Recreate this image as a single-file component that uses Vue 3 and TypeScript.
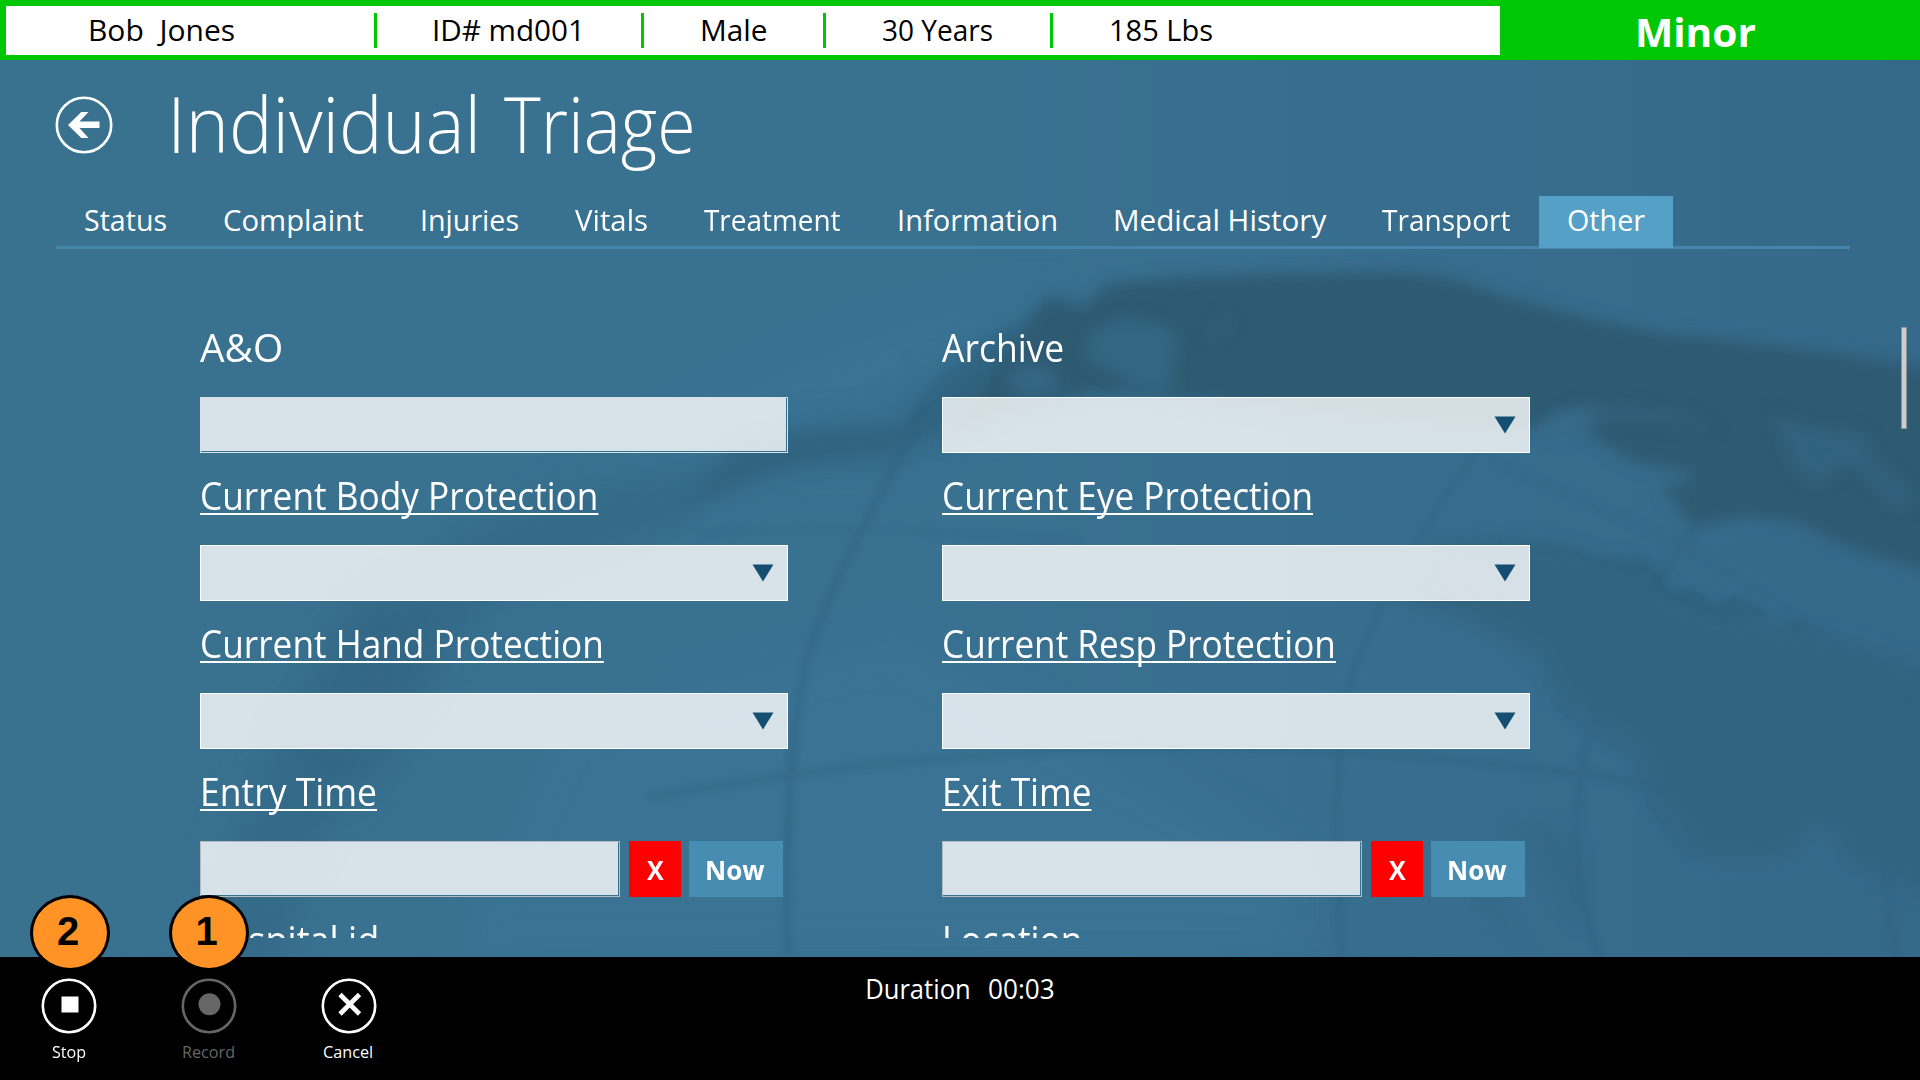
<script setup lang="ts">
import type { Directive } from 'vue'

interface Label { text: string; w: number }
interface Tab extends Label { cell: number }
interface Field extends Label { kind: 'text' | 'select' | 'time'; linked: boolean }

// Condenses a label horizontally. By default the glyphs span the given width;
// with .advance the whole text run, side bearings included, does.
const vFit: Directive<HTMLElement, number, 'advance'> = {
  mounted(el, { value, modifiers }) {
    const natural = el.offsetWidth
    el.style.marginRight = `${value - natural}px`
    if (modifiers.advance) {
      el.style.transform = `scaleX(${value / natural})`
      return
    }
    const ctx = document.createElement('canvas').getContext('2d')
    if (!ctx) return
    const cs = getComputedStyle(el)
    ctx.font = `${cs.fontWeight} ${cs.fontSize} ${cs.fontFamily}`
    const m = ctx.measureText(el.textContent ?? '')
    const s = value / (m.actualBoundingBoxLeft + m.actualBoundingBoxRight)
    el.style.transform = `translateX(${m.actualBoundingBoxLeft * s}px) scaleX(${s})`
  },
}

const patient: Label[] = [
  { text: 'Bob\u00a0 Jones', w: 144 },
  { text: 'ID# md001', w: 145 },
  { text: 'Male', w: 65 },
  { text: '30 Years', w: 109 },
  { text: '185 Lbs', w: 101 },
]

const tabs: Tab[] = [
  { text: 'Status', w: 81, cell: 139 },
  { text: 'Complaint', w: 139, cell: 198 },
  { text: 'Injuries', w: 96, cell: 153 },
  { text: 'Vitals', w: 72, cell: 129.5 },
  { text: 'Treatment', w: 136, cell: 194.5 },
  { text: 'Information', w: 157, cell: 216 },
  { text: 'Medical History', w: 211.5, cell: 267.5 },
  { text: 'Transport', w: 128, cell: 185.5 },
  { text: 'Other', w: 77, cell: 134 },
]

const fields: Field[] = [
  { text: 'A&O', w: 83, kind: 'text', linked: false },
  { text: 'Archive', w: 122, kind: 'select', linked: false },
  { text: 'Current Body Protection', w: 398.5, kind: 'select', linked: true },
  { text: 'Current Eye Protection', w: 371, kind: 'select', linked: true },
  { text: 'Current Hand Protection', w: 404, kind: 'select', linked: true },
  { text: 'Current Resp Protection', w: 393.5, kind: 'select', linked: true },
  { text: 'Entry Time', w: 177, kind: 'time', linked: true },
  { text: 'Exit Time', w: 149.5, kind: 'time', linked: true },
  { text: 'Hospital id', w: 179, kind: 'text', linked: false },
  { text: 'Location', w: 140, kind: 'text', linked: false },
]
</script>

<template>
  <div class="app">
    <header class="patient">
      <div class="facts">
        <div v-for="p in patient" :key="p.text" class="fact"><span v-fit="p.w" class="t">{{ p.text }}</span></div>
      </div>
      <div class="severity"><span v-fit="118" class="t">Minor</span></div>
    </header>

    <main class="page">
      <svg class="globe" viewBox="0 60 1920 897" preserveAspectRatio="none">
        <defs>
          <linearGradient id="sea" x1="0" y1="0" x2="1" y2="0">
            <stop offset="0" stop-color="#39728f" />
            <stop offset=".5" stop-color="#397191" />
            <stop offset="1" stop-color="#35698a" />
          </linearGradient>
          <filter id="b3" x="-10%" y="-10%" width="120%" height="120%"><feGaussianBlur stdDeviation="3" /></filter>
          <filter id="b7" x="-10%" y="-10%" width="120%" height="120%"><feGaussianBlur stdDeviation="8" /></filter>
          <filter id="b20" x="-30%" y="-30%" width="160%" height="160%"><feGaussianBlur stdDeviation="18" /></filter>
        </defs>
        <rect y="60" width="1920" height="897" fill="url(#sea)" />
        <path filter="url(#b20)" fill="#3a7495" opacity=".7" d="M150 960C260 700 560 440 900 330L1060 290L880 400L700 440C500 520 300 700 200 960ZM450 960L560 720L900 640L1300 860L1300 960Z" />
        <path filter="url(#b20)" fill="#336685" opacity=".6" d="M1060 320C980 350 925 385 890 425C820 430 750 430 700 470C560 480 430 530 370 610C290 720 210 830 180 980H280C300 860 370 740 450 640C520 570 610 560 670 530C740 450 850 470 900 470C930 430 980 420 1060 410Z" />
        <path filter="url(#b20)" fill="#336582" opacity=".5" d="M350 590C390 610 440 620 460 600L390 780C350 800 300 790 280 760Z" />
        <path filter="url(#b7)" fill="#2f617c" opacity=".65" d="M1050 310C970 340 940 370 905 425C850 430 790 425 740 440C720 460 690 500 660 530C740 470 820 460 890 455C930 430 980 410 1070 400Z" />
        <path filter="url(#b7)" fill="#2d5a72" d="M1035 310L1050 295L1085 308L1102 285C1180 273 1250 276 1355 272C1400 271 1440 274 1470 284C1530 305 1610 325 1680 335C1760 342 1840 352 1940 370V575L1863 553L1830 540L1798 523L1746 517L1694 527L1661 487L1694 480L1690 471L1640 465L1602 443L1583 427L1600 412L1563 410L1530 430C1400 430 1300 410 1180 400C1100 382 1000 400 935 450C975 390 1020 350 1035 310Z" />
        <g filter="url(#b7)" fill="#356987">
          <path opacity=".8" d="M1090 335Q1110 315 1135 320Q1175 320 1178 345Q1172 370 1170 390Q1140 395 1118 375Q1085 365 1085 350Z" />
          <ellipse cx="1033" cy="381" rx="26" ry="17" opacity=".85" />
          <path opacity=".4" d="M1205 338L1225 312L1234 325L1218 342Z" />
          <path d="M1540 430L1580 405L1640 408L1690 416L1720 430L1690 425L1600 420L1565 440Z" opacity=".5" />
          <path d="M1768 412L1815 428L1865 432L1872 456L1920 500L1895 510L1868 480L1850 462L1815 488L1790 463L1783 440Z" opacity=".55" />
        </g>
        <path filter="url(#b7)" fill="#326380" opacity=".8" d="M1433 543L1524 540L1570 545L1602 557L1655 563L1668 590L1726 613L1811 630L1940 670V900L1850 867L1824 823L1785 860L1700 860L1655 807L1635 753L1557 700L1537 657L1459 617L1400 600Z" />
        <path filter="url(#b3)" fill="#2e5e78" opacity=".6" d="M1500 538L1560 548L1602 562L1640 560L1655 570L1670 592L1690 587L1715 603L1735 595L1760 605L1775 625L1800 618L1820 638L1765 620L1720 620L1665 600L1645 575L1600 568L1560 552Z" />
        <path filter="url(#b7)" fill="#326681" opacity=".5" d="M1510 825L1560 830L1585 860L1580 930L1560 900L1530 850ZM1490 880L1510 930L1530 957L1480 900Z" />
        <g filter="url(#b3)" fill="none" stroke="#2f5f7e" stroke-width="6" opacity=".4">
          <path d="M925 405C880 500 835 570 810 650C790 720 785 820 788 957" stroke-width="8" />
          <path d="M1478 450C1410 540 1360 640 1345 700C1335 770 1336 860 1342 957" />
          <path d="M1700 520C1650 590 1600 690 1582 760C1572 830 1575 900 1600 957" />
          <path d="M1940 650C1890 720 1880 780 1882 850L1895 957" />
          <path d="M649 797C760 780 840 765 960 757C1100 745 1250 746 1400 756C1600 770 1760 800 1940 840" />
          <path d="M700 535C800 525 950 530 1080 542" opacity=".6" />
          <path d="M1490 460C1600 510 1750 560 1940 720M1430 590C1560 620 1640 650 1760 690" opacity=".6" />
          <path d="M1557 700C1570 730 1620 740 1636 760C1640 800 1665 830 1690 857" />
        </g>
      </svg>

      <div class="titlebar">
        <svg class="back" width="58" height="58" viewBox="0 0 58 58">
          <circle cx="29" cy="29" r="27.2" fill="none" stroke="#fff" stroke-width="2.6" />
          <path fill="#fff" d="M13 29L26.300 16H33.500L24.500 25.600H44.500V32H24.500L33.500 42H26.300Z" />
        </svg>
        <h1><span v-fit="301" class="t">Individual</span><span v-fit="188" class="t">Triage</span></h1>
      </div>

      <nav class="tabs">
        <div v-for="t in tabs" :key="t.text" class="tab" :class="{ active: t.text === 'Other' }" :style="{ width: t.cell + 'px' }"><span v-fit="t.w" class="t">{{ t.text }}</span></div>
      </nav>

      <section class="form">
        <div v-for="f in fields" :key="f.text" class="field">
          <label><span v-fit.advance="f.w" class="t" :class="{ linked: f.linked }">{{ f.text }}</span></label>
          <div v-if="f.kind === 'text'" class="box input"></div>
          <div v-else-if="f.kind === 'select'" class="box select">
            <svg width="22" height="18" viewBox="0 0 22 18"><path fill="#144f71" d="M.5 .5H21.500L11 17.500Z" /></svg>
          </div>
          <div v-else class="time">
            <div class="box input grey"></div>
            <div class="clear"><span v-fit="17" class="t">X</span></div>
            <div class="now"><span v-fit="58" class="t">Now</span></div>
          </div>
        </div>
      </section>
      <div class="thumb"></div>
    </main>

    <footer class="bar">
      <div class="cmd">
        <svg width="56" height="56" viewBox="0 0 56 56">
          <circle cx="28" cy="28" r="26.200" fill="none" stroke="#fff" stroke-width="2.600" />
          <rect x="20.500" y="18.500" width="17" height="16" fill="#fff" />
        </svg>
        <span v-fit="34" class="t">Stop</span>
        <b class="badge"><i>2</i></b>
      </div>
      <div class="cmd off">
        <svg width="56" height="56" viewBox="0 0 56 56">
          <circle cx="28" cy="28" r="26.200" fill="none" stroke="#666" stroke-width="2.600" />
          <circle cx="28.500" cy="26.300" r="11" fill="#666" />
        </svg>
        <span v-fit="51" class="t">Record</span>
        <b class="badge"><i>1</i></b>
      </div>
      <div class="cmd">
        <svg width="56" height="56" viewBox="0 0 56 56">
          <circle cx="28" cy="28" r="26.200" fill="none" stroke="#fff" stroke-width="2.600" />
          <path d="M19 16.500L38.500 36M38.500 16.500L19 36" stroke="#fff" stroke-width="4.600" />
        </svg>
        <span v-fit="48" class="t">Cancel</span>
      </div>
      <div class="duration"><span v-fit="102" class="t">Duration</span><span v-fit="65" class="t">00:03</span></div>
    </footer>
  </div>
</template>

<style>
body { margin: 0; background: #000; overflow: hidden; }
</style>

<style scoped>
.app {
  width: 1920px;
  height: 1080px;
  display: flex;
  flex-direction: column;
  overflow: hidden;
  color: #fff;
  font-family: "Open Sans", "Noto Sans", sans-serif;
}
.t {
  display: inline-block;
  white-space: pre;
  transform-origin: 0 50%;
}
.patient {
  box-sizing: border-box;
  height: 60px;
  flex: none;
  display: flex;
  background: #00c703;
  padding: 6px 0 5px 6px;
}
.facts {
  width: 1494px;
  display: flex;
  align-items: center;
  background: #fff;
  color: #000;
  font-size: 29.500px;
  line-height: 33px;
}
.fact {
  box-sizing: border-box;
  height: 35px;
  padding-left: 57px;
  border-right: 3px solid #00c703;
}
.fact:nth-child(1) { width: 371px; padding-left: 84px; }
.fact:nth-child(2) { width: 267px; }
.fact:nth-child(3) { width: 182px; padding-left: 57.500px; }
.fact:nth-child(4) { width: 227px; }
.fact:nth-child(5) { border-right: 0; padding-left: 58px; }
.severity {
  padding-left: 138px;
  font-size: 39.500px;
  font-weight: 700;
  line-height: 53px;
}
.page {
  position: relative;
  height: 897px;
  flex: none;
  display: flex;
  flex-direction: column;
}
.globe {
  position: absolute;
  inset: 0;
  width: 1920px;
  height: 897px;
}
.titlebar {
  position: relative;
  display: flex;
  align-items: flex-start;
  height: 136px;
  padding-left: 54.500px;
}
.back { flex: none; margin-top: 35.500px; }
h1 {
  display: flex;
  gap: 29px;
  margin: 12px 0 0 61px;
  font-size: 76.500px;
  font-weight: 300;
  line-height: 102px;
}
.tabs {
  position: relative;
  display: flex;
  height: 50px;
  margin: 0 70px 0 56px;
  border-bottom: 3px solid #4486ab;
  font-size: 29.500px;
  line-height: 48px;
}
.tab {
  box-sizing: border-box;
  flex: none;
  height: 52px;
  padding-left: 28.500px;
}
.tab.active { background: #54a0c6; }
.form {
  position: relative;
  display: grid;
  grid-template-columns: 588px 588px;
  grid-auto-rows: 148px;
  column-gap: 154px;
  flex: none;
  height: 689px;
  margin: 0 0 0 200px;
  padding-top: 60px;
  box-sizing: border-box;
  overflow: hidden;
}
label {
  display: block;
  height: 88px;
  font-size: 37.500px;
  line-height: 77px;
}
.linked {
  text-decoration: underline;
  text-decoration-thickness: 2px;
  text-decoration-skip-ink: none;
  text-underline-offset: 3px;
}
.box {
  box-sizing: border-box;
  width: 588px;
  height: 56px;
  background: rgba(255, 255, 255, .8);
  border: 1px solid #fff;
}
.input {
  border-color: #d7e2e8;
  box-shadow: inset -1px -1px 0 #3a718f;
}
.select {
  display: flex;
  justify-content: flex-end;
  padding: 18px 13px 0 0;
}
.time { display: flex; }
.time .box { width: 420px; }
.input.grey { border-color: #b5bcc0; }
.clear, .now {
  height: 56px;
  font-size: 26.500px;
  font-weight: 700;
  line-height: 58px;
  display: flex;
  justify-content: center;
}
.clear { width: 52px; margin: 0 8px 0 9px; background: #f00; }
.now { width: 94px; background: #478db1; }
.thumb {
  position: absolute;
  right: 13px;
  top: 267px;
  width: 6px;
  height: 102px;
  background: #cdcdcd;
  border: 1px solid #8a9499;
  box-sizing: border-box;
}
.bar {
  position: relative;
  height: 123px;
  flex: none;
  display: flex;
  background: #000;
}
.cmd {
  position: relative;
  width: 140px;
  display: flex;
  flex-direction: column;
  align-items: center;
  padding-top: 20.500px;
  font-size: 16.500px;
  line-height: 24px;
}
.cmd svg { flex: none; margin-bottom: 6px; }
.cmd:first-child { width: 137px; }
.cmd + .cmd { margin-left: 1.500px; }
.cmd + .cmd + .cmd { margin-left: 0; }
.off { color: #666; }
.badge {
  position: absolute;
  top: -62px;
  left: 30px;
  box-sizing: border-box;
  width: 80px;
  height: 76px;
  border: 3px solid #000;
  border-radius: 50%;
  background: #ff9326;
  color: #000;
  font: 700 40px/67px "Liberation Sans", Arial, sans-serif;
  text-align: center;
}
.badge i { font-style: normal; margin-right: 4px; }
.duration {
  display: flex;
  gap: 21px;
  margin-left: 448px;
  font-size: 27.500px;
  line-height: 63px;
}
</style>
